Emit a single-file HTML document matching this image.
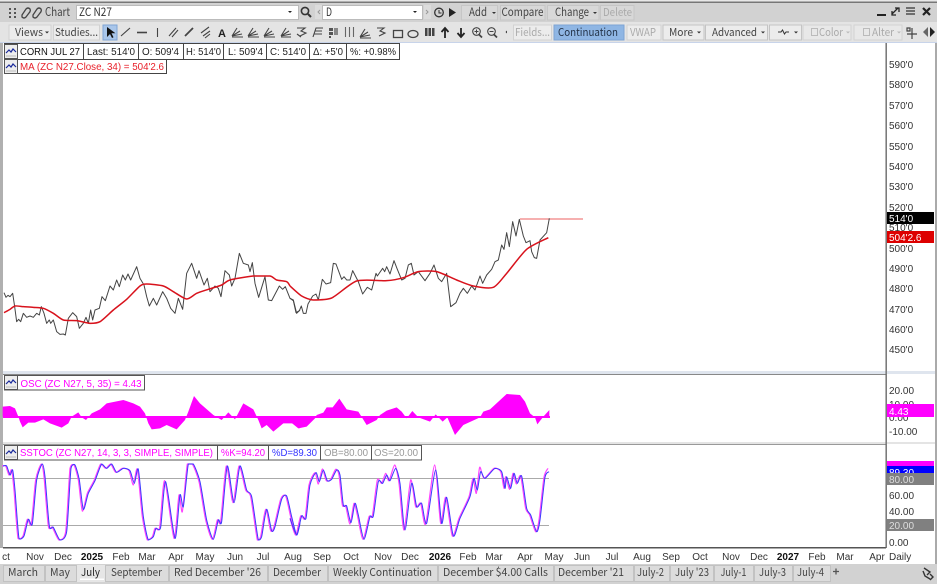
<!DOCTYPE html>
<html><head><meta charset="utf-8"><title>Chart</title>
<style>
html,body{margin:0;padding:0;background:#d2d2d2;width:937px;height:584px;overflow:hidden}
svg{display:block}
.u{font-family:"Noto Sans CJK JP","Liberation Sans",sans-serif;font-size:11px;fill:#444}
.d{fill:#aaa}
.l{font-family:"Liberation Sans",sans-serif;font-size:10px;fill:#111}
.a{font-family:"Liberation Sans",sans-serif;font-size:10px;fill:#333}
.m{text-anchor:middle}
.b{font-weight:bold;fill:#111}
.ic{fill:none;stroke:#444;stroke-width:1.1}
</style></head><body>
<svg width="937" height="584" viewBox="0 0 937 584" xmlns="http://www.w3.org/2000/svg">
<defs>
<g id="leg"><rect x="0.5" y="0.5" width="13" height="14" fill="#eee" stroke="#555"/><path d="M2 9L5 6L7 8L9 5L12 8" fill="none" stroke="#1a2a9a" stroke-width="1.2"/><path d="M2 12H12" stroke="#bbb"/></g>
</defs>
<rect width="937" height="584" fill="#d2d2d2"/>
<rect width="937" height="1.5" fill="#e8e8e8"/><rect y="1.5" width="937" height="1.5" fill="#777"/>
<rect y="22" width="937" height="20" fill="#e4e4e4"/>
<rect y="42" width="937" height="1.5" fill="#c8d4ea"/>

<!-- row 1 -->
<g fill="#555"><rect x="9" y="8" width="2" height="2"/><rect x="14" y="8" width="2" height="2"/><rect x="9" y="12" width="2" height="2"/><rect x="14" y="12" width="2" height="2"/><rect x="9" y="16" width="2" height="2"/><rect x="14" y="16" width="2" height="2"/></g>
<path class="ic" style="stroke-width:1.3" d="M22 15L26 9Q28 7 30 9Q31 11 29 13L26 17Q24 19 22 17ZM33 15L37 9Q39 7 41 9Q42 11 40 13L37 17Q35 19 33 17Z"/>
<text class="u" x="45" y="16" style="font-size:12px" textLength="25" lengthAdjust="spacingAndGlyphs">Chart</text>
<rect x="76.500" y="5.500" width="222" height="14" fill="#fff" stroke="#bbb"/>
<text class="u" x="79" y="16" style="fill:#333;font-size:11.5px" textLength="33" lengthAdjust="spacingAndGlyphs">ZC N27</text>
<path d="M288 11h4l-2 2z" fill="#222"/>
<circle cx="305" cy="11" r="3.600" fill="none" stroke="#333" stroke-width="1.600"/><path d="M308 14l3 3" stroke="#333" stroke-width="2"/>
<rect x="315" y="5" width="7" height="14" fill="#dcdcdc"/><path d="M320 10l-2 2 2 2" fill="none" stroke="#999"/>
<rect x="322.500" y="5.500" width="100" height="14" fill="#fff" stroke="#bbb"/>
<text class="u" x="326" y="16" style="fill:#333;font-size:11.500px" textLength="6" lengthAdjust="spacingAndGlyphs">D</text>
<path d="M413 11h4l-2 2z" fill="#222"/>
<rect x="424" y="5" width="7" height="14" fill="#dcdcdc"/><path d="M426 10l2 2-2 2" fill="none" stroke="#999"/>
<circle cx="439" cy="12.500" r="4.300" fill="none" stroke="#333" stroke-width="1.300"/><path d="M439 10v3h2.500" fill="none" stroke="#333"/>
<path d="M449 8l7 4.500-7 4.500z" fill="#222"/>
<rect x="461.500" y="5.500" width="36" height="14.500" fill="#d8d8d8" stroke="#c6c6c6"/>
<text class="u" x="469" y="16" style="font-size:11.500px" textLength="18" lengthAdjust="spacingAndGlyphs">Add</text><path d="M492 12h4l-2 2z" fill="#333"/>
<rect x="500.500" y="5.500" width="44.500" height="14.500" fill="#d8d8d8" stroke="#c6c6c6"/>
<text class="u" x="501.500" y="16" style="font-size:11.500px" textLength="42" lengthAdjust="spacingAndGlyphs">Compare</text>
<rect x="547.500" y="5.500" width="51.500" height="14.500" fill="#d8d8d8" stroke="#c6c6c6"/>
<text class="u" x="555" y="16" style="font-size:11.500px" textLength="34" lengthAdjust="spacingAndGlyphs">Change</text><path d="M593 12h4l-2 2z" fill="#333"/>
<rect x="600.500" y="5.500" width="33.500" height="14.500" fill="#d8d8d8" stroke="#c6c6c6"/>
<text class="u d" x="603" y="16" style="font-size:11px" textLength="29" lengthAdjust="spacingAndGlyphs">Delete</text>
<path d="M877 15h9" stroke="#222" stroke-width="2"/>
<path d="M892 14l6-6M895 8h4v4M892 11v4h4" fill="none" stroke="#222" stroke-width="1.300"/>
<path d="M906 8h9M906 11h9M906 14h9" stroke="#333" stroke-width="1.300"/>
<path d="M923 8l7 7M930 8l-7 7" stroke="#222" stroke-width="2.200"/>

<!-- row 2 -->
<rect x="9" y="25" width="42" height="15" fill="#ececec" stroke="#d2d2d2"/>
<text class="u" x="15" y="36" textLength="28" lengthAdjust="spacingAndGlyphs">Views</text><path d="M45 31.500h4l-2 2z" fill="#333"/>
<rect x="53.500" y="25" width="46" height="15" fill="#ececec" stroke="#d2d2d2"/>
<text class="u" x="55" y="36" textLength="43" lengthAdjust="spacingAndGlyphs">Studies...</text>
<rect x="103" y="25" width="14" height="15" fill="#a9c6ea" stroke="#7ea4d4"/>
<path d="M107 27l0 10 3-3 2 4 1.500-.7-2-4h4z" fill="#111"/>
<g class="ic">
<path d="M121 36l9-8"/><path d="M137 32.500h10" stroke-width="1.600"/><path d="M157.500 28v9"/>
<path d="M169 36l7-8M172 37l6-7"/>
<path d="M185 36l8-8" stroke-width="1.800"/>
<path d="M201 33l8-6M203 36l7-5M205 38l5-4"/>
<path d="M232 36l10-2M232 36l8-5M232 36l5-8M232 37h11"/>
<path d="M248 36l10-2M248 36l8-5M248 36l5-8M248 37h11"/>
<path d="M264 36l10-2M264 36l8-5M264 36l5-8M264 37h11"/>
<path d="M281 36l10-2M281 36l8-5M281 36l5-8M281 37h10"/>
<path d="M297 28h8l-4 3 5 2-6 3M297 34l4 3"/>
<path d="M313 37l3-9h7M315 31h7M314 34h8"/>
</g>
<text x="218" y="37" style="font:bold 11px 'Liberation Sans',sans-serif;fill:#222">A</text>
<g fill="#555"><rect x="329" y="28" width="4" height="3"/><rect x="329" y="32" width="4" height="3"/><rect x="329" y="36" width="2" height="2"/><rect x="334" y="28" width="4" height="7" fill="#888"/></g>
<g class="ic"><path d="M345.500 27v10M349.500 27v10M353.500 27v10" stroke="#666"/>
<path d="M360 37l10-2M360 37l8-5M360 37l5-8M360 38h11"/>
<path d="M377 28h7l-4 3 5 2-6 3"/>
<rect x="393.500" y="30.500" width="9" height="7" stroke-width="1.300"/>
<ellipse cx="413" cy="34" rx="5" ry="3.500" stroke-width="1.300"/></g>
<g fill="#444"><rect x="425" y="28" width="2.500" height="8"/><rect x="428.500" y="28" width="2.500" height="8"/><rect x="432" y="28" width="2.500" height="8"/></g>
<path d="M445 38v-9M441.500 32l3.500-4 3.500 4" fill="none" stroke="#222" stroke-width="1.800"/>
<path d="M461 28v9M457.500 33l3.500 4 3.500-4" fill="none" stroke="#222" stroke-width="1.800"/>
<g class="ic"><circle cx="476.500" cy="31.500" r="3.800"/><path d="M479 34.500l3 3" stroke-width="1.800"/><path d="M474.500 31.500h4M476.500 29.500v4" stroke-width="1"/>
<circle cx="491.500" cy="31.500" r="3.800"/><path d="M494 34.500l3 3" stroke-width="1.800"/><path d="M489.500 31.500h4" stroke-width="1"/></g>
<path d="M507 30.500v3l-1.500-1.500z" fill="#333"/>
<rect x="513.500" y="25" width="38" height="15" fill="#ececec" stroke="#d2d2d2"/>
<text class="u d" x="515" y="36" textLength="35" lengthAdjust="spacingAndGlyphs">Fields...</text>
<rect x="554" y="25" width="70" height="15" fill="#8fb6e4" stroke="#7ea4d4"/>
<text class="u" x="558" y="36" style="fill:#24344a" textLength="60" lengthAdjust="spacingAndGlyphs">Continuation</text>
<rect x="627" y="25" width="34" height="15" fill="#ececec" stroke="#d2d2d2"/>
<text class="u d" x="630" y="36" textLength="26" lengthAdjust="spacingAndGlyphs">VWAP</text>
<rect x="663" y="25" width="41" height="15" fill="#ececec" stroke="#c4c4c4"/>
<text class="u" x="669" y="36" textLength="24" lengthAdjust="spacingAndGlyphs">More</text><path d="M697 31.500h4l-2 2z" fill="#333"/>
<rect x="705.500" y="25" width="62" height="15" fill="#ececec" stroke="#c4c4c4"/>
<text class="u" x="712" y="36" textLength="45" lengthAdjust="spacingAndGlyphs">Advanced</text><path d="M761 31.500h4l-2 2z" fill="#333"/>
<rect x="769.500" y="25" width="32" height="15" fill="#ececec" stroke="#c4c4c4"/>
<path d="M778 32h3l1.500-2 2 4 1.500-2h3" fill="none" stroke="#333"/><path d="M794 31.500h4l-2 2z" fill="#333"/>
<rect x="803" y="25" width="48" height="15" fill="#e8e8e8" stroke="#d2d2d2"/>
<rect x="811.500" y="28.500" width="6" height="7" fill="none" stroke="#bbb"/><text class="u d" x="819" y="36" textLength="24" lengthAdjust="spacingAndGlyphs">Color</text><path d="M846 31.500h4l-2 2z" fill="#bbb"/>
<rect x="854" y="25" width="48" height="15" fill="#e8e8e8" stroke="#d2d2d2"/>
<rect x="863.500" y="28.500" width="6" height="7" fill="none" stroke="#bbb"/><text class="u d" x="872" y="36" textLength="22" lengthAdjust="spacingAndGlyphs">Alter</text><path d="M897 31.500h4l-2 2z" fill="#bbb"/>
<path d="M907 34h10M912 28v11M907 28h3v3h-3z" fill="none" stroke="#444" stroke-width="1.200"/>
<path d="M928 27l-5 5 5 5z" fill="#666"/><path d="M930 27l5 5-5 5z" fill="#222"/>

<!-- panes -->
<rect x="3" y="43" width="883" height="328" fill="#fff"/>
<rect x="887" y="43" width="48" height="505" fill="#fff"/>
<rect x="3" y="371" width="932" height="3" fill="#dfe5ee"/>
<rect x="3" y="374" width="883" height="68" fill="#fff"/>
<rect x="3" y="374" width="883" height="1" fill="#888"/>
<rect x="3" y="442" width="932" height="2" fill="#e4e4e4"/>
<rect x="3" y="444" width="883" height="104" fill="#fff"/>
<rect x="3" y="444" width="883" height="1" fill="#999"/>
<rect x="0" y="548" width="937" height="16" fill="#fff"/>
<rect x="0" y="43" width="3" height="505" fill="#b0b0b0"/>
<rect x="935" y="43" width="2" height="521" fill="#aaa"/>
<rect x="3" y="547" width="883" height="1.500" fill="#555"/>
<rect x="885.500" y="43" width="1.300" height="505" fill="#666"/>

<!-- grid stoch -->
<path d="M3 478.500H549M3 525.500H549" stroke="#aaa" stroke-width="1"/>

<!-- OSC -->
<rect x="3" y="416" width="547" height="2" fill="#f0f"/>
<g transform="translate(0,370) scale(.33333)" fill="#f0f">
<polygon points="8,140 8,110 30,108 45,115 55,140 60,155 68,172 85,158 105,158 130,148 150,160 185,173 205,160 215,140 235,127 245,142 258,150 275,130 300,118 320,100 370,90 400,100 420,110 435,130 445,160 455,178 480,175 500,165 530,178 555,150 565,125 582,78 600,100 640,135 665,150 685,127 705,148 730,100 760,118 775,150 785,175 800,165 820,185 850,160 880,160 900,175 900,142"/>
</g>
<g transform="translate(290,370) scale(.33333)" fill="#f0f">
<polygon points="0,142 0,155 25,175 50,170 75,145 80,135 100,128 110,112 128,112 148,86 170,118 205,125 230,165 260,150 270,135 290,122 320,112 335,125 350,145 367,123 385,142 420,155 437,133 458,155 472,142 495,195 520,165 570,142 580,125 600,118 650,72 690,75 705,95 720,130 735,142 742,163 760,140 778,120 778,142"/>
</g>

<!-- stoch -->
<g fill="none" stroke-linejoin="round">
<g transform="translate(-1,440) scale(.33333)" stroke="#ff44ff" stroke-width="3.600">
<polyline class="sm" points="9,78 20,78 30,105 38,90 45,150 57,295 72,288 85,238 97,252 110,120 127,72 135,110 148,258 160,262 180,300 200,275 213,85 225,75 238,120 250,213 265,160 285,122 305,72 320,85 335,72 350,97 370,85 390,92 403,135 415,88 430,230 445,300 460,290 468,265 482,262 497,122 525,295 540,165 550,215 565,72 580,72 600,125 620,240 640,298 655,240 665,245 682,78 702,188 720,78 740,150 755,170 775,300 785,290 800,208 815,272 825,260 845,178 860,168 875,230 890,285 900,250"/>
</g>
<g transform="translate(289,440) scale(.33333)" stroke="#ff44ff" stroke-width="3.600">
<polyline class="sm" points="3,235 20,285 35,228 48,235 60,135 78,98 88,132 100,87 112,122 125,118 140,88 150,105 160,195 170,198 183,252 195,190 205,225 222,298 240,230 250,228 265,120 278,130 290,100 300,122 317,75 330,130 345,270 365,120 380,200 395,190 410,252 437,75 455,250 470,172 490,288 510,235 540,170 552,115 562,160 572,82 585,115 615,85 635,95 645,145 650,110 662,148 672,100 682,132 695,108 710,205 722,225 740,275 750,240 765,112 777,85"/>
</g>
<g transform="translate(0,440) scale(.33333)" stroke="#3a3aff" stroke-width="3">
<polyline class="sm" points="9,78 20,78 30,105 38,90 45,150 57,295 72,288 85,238 97,252 110,120 127,72 135,110 148,258 160,262 180,300 200,275 213,85 225,75 238,120 250,208 265,160 285,122 305,72 320,85 335,72 350,97 370,85 390,92 403,130 415,88 430,230 445,300 460,290 468,265 482,262 497,125 525,295 540,165 550,200 565,72 580,72 600,125 620,240 640,298 655,240 665,245 682,78 702,188 720,78 740,150 755,170 775,300 785,290 800,208 815,272 825,260 845,178 860,168 875,230 890,285 900,250"/>
</g>
<g transform="translate(290,440) scale(.33333)" stroke="#3a3aff" stroke-width="3">
<polyline class="sm" points="0,235 20,285 35,228 48,235 60,135 78,98 88,125 100,90 112,122 125,118 140,90 150,105 160,195 170,198 183,248 195,190 205,225 222,298 240,230 250,228 265,125 278,130 290,105 300,122 317,85 330,130 345,270 365,130 380,200 395,190 410,250 437,90 455,250 470,172 490,288 510,235 540,170 552,115 562,150 572,95 585,115 615,85 635,95 645,145 650,110 662,145 672,100 682,130 695,108 710,205 722,225 740,275 750,240 765,112 777,95"/>
</g>
</g>

<!-- price -->
<path d="M520 219H583" stroke="#f08080" stroke-width="1.300"/>
<g fill="none" stroke-linejoin="round">
<g transform="translate(0,210) scale(.33333)">
<polyline stroke="#444" stroke-width="3" points="12,248 18,262 24,256 30,260 38,250 44,290 50,335 56,328 62,335 70,310 80,322 90,318 100,322 110,310 118,315 124,290 132,310 140,340 148,330 152,340 160,330 170,365 180,373 190,372 196,375 205,325 218,308 230,320 238,355 250,340 258,322 265,340 272,300 278,330 285,300 298,295 306,260 316,272 330,228 340,240 350,210 358,230 368,195 376,210 384,192 392,210 410,170 420,205 432,225 440,260 448,288 460,265 470,285 488,245 500,265 512,295 525,310 535,265 548,298 560,190 575,160 590,205 597,182 612,225 622,205 630,245 645,228 655,235 663,260 675,182 688,195 695,228 705,205 718,130 730,160 745,165 750,185 757,158 765,220 776,262 795,200 805,270 815,272 838,228 848,238 856,230 870,265 880,270 890,310 900,300"/>
</g>
<g transform="translate(290,210) scale(.33333)">
<polyline stroke="#444" stroke-width="3" points="0,265 10,272 18,308 28,302 34,288 40,310 48,310 54,282 68,258 78,252 85,270 97,208 108,222 122,218 130,160 138,162 155,208 162,200 170,210 180,210 188,182 205,215 218,252 232,232 245,240 258,190 262,198 278,175 284,185 290,170 300,192 312,152 322,178 335,210 345,205 355,165 364,160 372,195 385,185 405,212 420,190 432,165 445,205 455,215 470,190 482,290 498,278 510,250 520,235 532,250 545,228 555,240 570,198 578,220 590,195 605,178 615,155 625,150 635,105 642,118 650,68 658,110 668,35 678,78 688,28 700,78 708,98 720,92 725,125 733,143 740,145 750,90 770,68 778,25"/>
</g>
<g transform="translate(0,210) scale(.33333)">
<polyline class="sm" stroke="#d8121c" stroke-width="4.500" points="12,308 30,298 45,288 70,290 100,292 130,295 160,310 190,330 230,332 270,340 300,335 340,300 380,268 420,228 440,222 490,228 520,245 560,267 590,250 625,238 665,225 690,210 760,198 810,198 830,210 860,215 870,228"/>
</g>
<g transform="translate(290,210) scale(.33333)">
<polyline class="sm" stroke="#d8121c" stroke-width="4.500" points="0,228 35,258 70,270 125,264 200,213 290,212 340,203 385,185 440,185 500,210 550,228 610,232 650,190 710,118 775,83"/>
</g>
</g>

<!-- legends -->
<rect x="4.500" y="43.500" width="395" height="16" fill="#fff" stroke="#444"/>
<path d="M17.500 43.500v16M83.500 43.500v16M138.500 43.500v16M183.500 43.500v16M223.500 43.500v16M266.500 43.500v16M309.500 43.500v16M346.500 43.500v16" stroke="#444"/>
<use href="#leg" x="4" y="44"/>
<text class="l" x="20" y="55" textLength="60" lengthAdjust="spacingAndGlyphs">CORN JUL 27</text>
<text class="l" x="87" y="55" style="fill:#222" textLength="48" lengthAdjust="spacingAndGlyphs">Last: 514'0</text>
<text class="l" x="142" y="55" style="fill:#222" textLength="37" lengthAdjust="spacingAndGlyphs">O: 509'4</text>
<text class="l" x="186" y="55" style="fill:#222" textLength="35" lengthAdjust="spacingAndGlyphs">H: 514'0</text>
<text class="l" x="228" y="55" style="fill:#222" textLength="35" lengthAdjust="spacingAndGlyphs">L: 509'4</text>
<text class="l" x="270" y="55" style="fill:#222" textLength="36" lengthAdjust="spacingAndGlyphs">C: 514'0</text>
<text class="l" x="313" y="55" style="fill:#222" textLength="30" lengthAdjust="spacingAndGlyphs">Δ: +5'0</text>
<text class="l" x="350" y="55" style="fill:#222" textLength="46" lengthAdjust="spacingAndGlyphs">%: +0.98%</text>
<rect x="4.500" y="59.500" width="162" height="14" fill="#fff" stroke="#444"/>
<path d="M17.500 59.500v14" stroke="#444"/>
<use href="#leg" x="4" y="59"/>
<text class="l" x="20" y="70" style="fill:#e8202a" textLength="144" lengthAdjust="spacingAndGlyphs">MA (ZC N27.Close, 34) = 504'2.6</text>

<rect x="4.500" y="375.500" width="140" height="14.500" fill="#fff" stroke="#555"/>
<path d="M17.500 375.500v14.500" stroke="#555"/>
<use href="#leg" x="4" y="375"/>
<text class="l" x="20.500" y="387" style="fill:#f0f" textLength="121" lengthAdjust="spacingAndGlyphs">OSC (ZC N27, 5, 35) = 4.43</text>

<rect x="4.500" y="445.500" width="417" height="14.500" fill="#fff" stroke="#555"/>
<path d="M17.500 445.500v14.500M217.500 445.500v14.500M268.500 445.500v14.500M320.500 445.500v14.500M371.500 445.500v14.500" stroke="#555"/>
<use href="#leg" x="4" y="445"/>
<text class="l" x="20" y="456" style="fill:#f0f" textLength="193" lengthAdjust="spacingAndGlyphs">SSTOC (ZC N27, 14, 3, 3, SIMPLE, SIMPLE)</text>
<text class="l" x="221" y="456" style="fill:#f0f" textLength="44" lengthAdjust="spacingAndGlyphs">%K=94.20</text>
<text class="l" x="272" y="456" style="fill:#33f" textLength="45" lengthAdjust="spacingAndGlyphs">%D=89.30</text>
<text class="l" x="324" y="456" style="fill:#999" textLength="44" lengthAdjust="spacingAndGlyphs">OB=80.00</text>
<text class="l" x="374" y="456" style="fill:#999" textLength="44" lengthAdjust="spacingAndGlyphs">OS=20.00</text>

<!-- y axis -->
<g>
<text class="a" x="889" y="68">590'0</text><text class="a" x="889" y="88">580'0</text><text class="a" x="889" y="109">570'0</text>
<text class="a" x="889" y="129">560'0</text><text class="a" x="889" y="150">550'0</text><text class="a" x="889" y="170">540'0</text>
<text class="a" x="889" y="190">530'0</text><text class="a" x="889" y="211">520'0</text><text class="a" x="889" y="231">510'0</text>
<text class="a" x="889" y="252">500'0</text><text class="a" x="889" y="272">490'0</text><text class="a" x="889" y="292">480'0</text>
<text class="a" x="889" y="313">470'0</text><text class="a" x="889" y="333">460'0</text><text class="a" x="889" y="353">450'0</text>
<text class="a" x="889" y="394">20.00</text><text class="a" x="889" y="408">10.00</text><text class="a" x="889" y="421">0.00</text><text class="a" x="889" y="435">-10.00</text>
<text class="a" x="889" y="499">60.00</text><text class="a" x="889" y="515">40.00</text><text class="a" x="889" y="546">0.00</text>
<text class="a" x="889" y="560">Daily</text>
</g>
<rect x="887" y="212" width="47" height="12" fill="#000"/><text class="a" x="889" y="222" style="fill:#fff">514'0</text>
<rect x="887" y="231" width="47" height="12" fill="#d00"/><text class="a" x="889" y="241" style="fill:#fff">504'2.6</text>
<rect x="887" y="404" width="47" height="13" fill="#f0f"/><text class="a" x="889" y="415" style="fill:#fff">4.43</text>
<rect x="887" y="461" width="47" height="5" fill="#f0f"/>
<rect x="887" y="466" width="47" height="7" fill="#00f"/><text class="a" x="889" y="476" style="fill:#fff">89.30</text>
<rect x="887" y="473" width="47" height="12" fill="#808080"/><text class="a" x="889" y="483" style="fill:#ddd">80.00</text>
<rect x="887" y="519" width="47" height="12" fill="#808080"/><text class="a" x="889" y="529" style="fill:#ddd">20.00</text>

<!-- time axis -->
<g>
<text class="a m" x="6" y="560">ct</text><text class="a m" x="35" y="560">Nov</text><text class="a m" x="63" y="560">Dec</text><text class="a m b" x="92" y="560">2025</text>
<text class="a m" x="121" y="560">Feb</text><text class="a m" x="147" y="560">Mar</text><text class="a m" x="176" y="560">Apr</text><text class="a m" x="205" y="560">May</text>
<text class="a m" x="235" y="560">Jun</text><text class="a m" x="263" y="560">Jul</text><text class="a m" x="293" y="560">Aug</text><text class="a m" x="322" y="560">Sep</text>
<text class="a m" x="351" y="560">Oct</text><text class="a m" x="383" y="560">Nov</text><text class="a m" x="410" y="560">Dec</text><text class="a m b" x="440" y="560">2026</text>
<text class="a m" x="468" y="560">Feb</text><text class="a m" x="494" y="560">Mar</text><text class="a m" x="525" y="560">Apr</text><text class="a m" x="554" y="560">May</text>
<text class="a m" x="582" y="560">Jun</text><text class="a m" x="612" y="560">Jul</text><text class="a m" x="642" y="560">Aug</text><text class="a m" x="671" y="560">Sep</text>
<text class="a m" x="700" y="560">Oct</text><text class="a m" x="731" y="560">Nov</text><text class="a m" x="759" y="560">Dec</text><text class="a m b" x="788" y="560">2027</text>
<text class="a m" x="817" y="560">Feb</text><text class="a m" x="845" y="560">Mar</text><text class="a m" x="877" y="560">Apr</text>
</g>

<!-- tabs -->
<rect y="564" width="937" height="20" fill="#d2d2d2"/>
<g fill="#dcdcdc" stroke="#c2c2c2">
<rect x="3.500" y="565.500" width="41" height="16"/><rect x="45.500" y="565.500" width="31" height="16"/>
<rect x="105.500" y="565.500" width="63" height="16"/><rect x="169.500" y="565.500" width="98" height="16"/><rect x="268.500" y="565.500" width="59" height="16"/>
<rect x="328.500" y="565.500" width="109" height="16"/><rect x="438.500" y="565.500" width="115" height="16"/><rect x="554.500" y="565.500" width="79" height="16"/>
<rect x="634.500" y="565.500" width="35" height="16"/><rect x="670.500" y="565.500" width="43" height="16"/><rect x="714.500" y="565.500" width="39" height="16"/><rect x="754.500" y="565.500" width="38" height="16"/><rect x="793.500" y="565.500" width="37" height="16"/>
</g>
<rect x="77" y="565" width="28" height="17" fill="#e6e6e6"/><rect x="80" y="578.500" width="24" height="1.500" fill="#fff"/>
<g>
<text class="u" x="8" y="576" textLength="30" lengthAdjust="spacingAndGlyphs">March</text>
<text class="u" x="50" y="576" textLength="20" lengthAdjust="spacingAndGlyphs">May</text>
<text class="u" x="81" y="576" style="fill:#222" textLength="19" lengthAdjust="spacingAndGlyphs">July</text>
<text class="u" x="111" y="576" textLength="51" lengthAdjust="spacingAndGlyphs">September</text>
<text class="u" x="174" y="576" textLength="87" lengthAdjust="spacingAndGlyphs">Red December '26</text>
<text class="u" x="273" y="576" textLength="48" lengthAdjust="spacingAndGlyphs">December</text>
<text class="u" x="333" y="576" textLength="99" lengthAdjust="spacingAndGlyphs">Weekly Continuation</text>
<text class="u" x="443" y="576" textLength="105" lengthAdjust="spacingAndGlyphs">December $4.00 Calls</text>
<text class="u" x="558" y="576" textLength="66" lengthAdjust="spacingAndGlyphs">December '21</text>
<text class="u" x="637" y="576" textLength="27" lengthAdjust="spacingAndGlyphs">July-2</text>
<text class="u" x="675" y="576" textLength="34" lengthAdjust="spacingAndGlyphs">July '23</text>
<text class="u" x="720.500" y="576" textLength="26" lengthAdjust="spacingAndGlyphs">July-1</text>
<text class="u" x="759" y="576" textLength="27" lengthAdjust="spacingAndGlyphs">July-3</text>
<text class="u" x="797" y="576" textLength="27" lengthAdjust="spacingAndGlyphs">July-4</text>
</g>
<path d="M833 571.500h6M836 568.500v6" stroke="#555" stroke-width="1.300"/>
<path d="M924 568l6 4-3 3M923 571l2 5 5 3M930 574l3 3-3 3" fill="none" stroke="#333" stroke-width="1.400"/>
</svg>
<script>
document.querySelectorAll('polyline.sm').forEach(function(el){
  var p=el.getAttribute('points').trim().split(/\s+/).map(function(s){return s.split(',').map(Number)});
  var ys=p.map(function(q){return q[1]});
  var lo=Math.min.apply(null,ys),hi=Math.max.apply(null,ys);
  function cl(v){return Math.max(lo,Math.min(hi,v))}
  var d='M'+p[0][0]+' '+p[0][1];
  for(var i=0;i<p.length-1;i++){
    var a=p[Math.max(i-1,0)],b=p[i],c=p[i+1],e=p[Math.min(i+2,p.length-1)];
    var k=0.12;
    d+='C'+(b[0]+(c[0]-a[0])*k)+' '+cl(b[1]+(c[1]-a[1])*k)+' '+(c[0]-(e[0]-b[0])*k)+' '+cl(c[1]-(e[1]-b[1])*k)+' '+c[0]+' '+c[1];
  }
  var n=document.createElementNS('http://www.w3.org/2000/svg','path');
  n.setAttribute('d',d);
  if(el.getAttribute('stroke'))n.setAttribute('stroke',el.getAttribute('stroke'));
  if(el.getAttribute('stroke-width'))n.setAttribute('stroke-width',el.getAttribute('stroke-width'));
  el.parentNode.replaceChild(n,el);
});
</script>
</body></html>
